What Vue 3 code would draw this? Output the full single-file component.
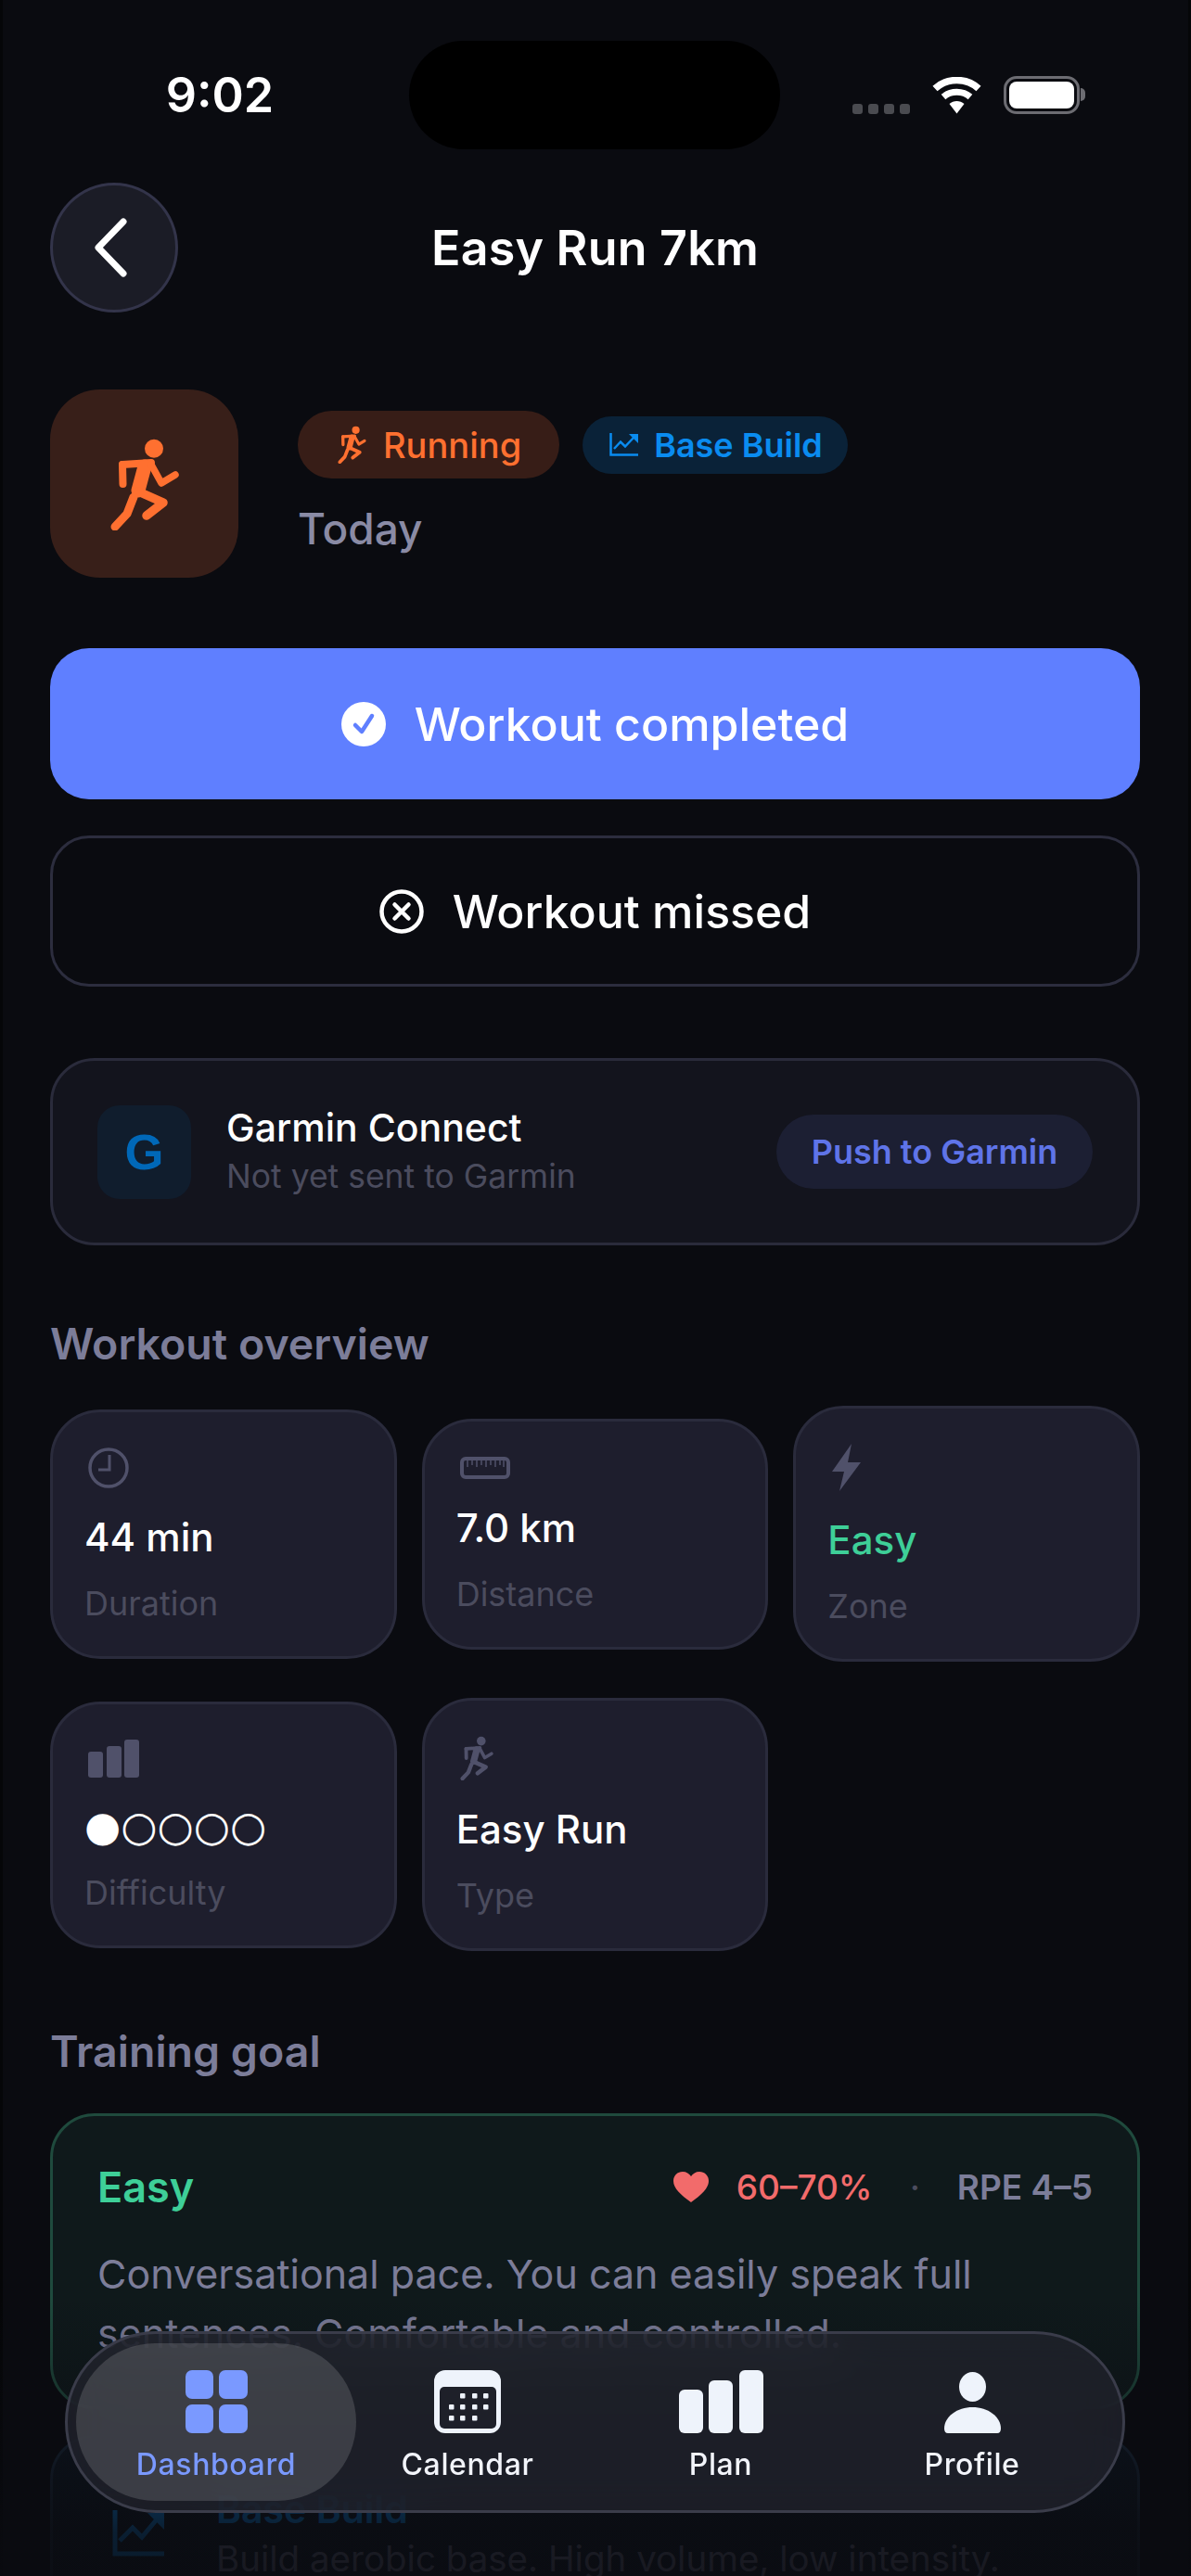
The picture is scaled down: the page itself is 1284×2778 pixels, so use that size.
<template>
  <div class="page">
    <svg class="defs" width="0" height="0">
      <symbol id="runner" viewBox="0 0 74 100">
        <circle cx="47" cy="11.700" r="10" fill="currentColor" stroke="none" />
        <g fill="none" stroke="currentColor" stroke-linecap="round" stroke-linejoin="round">
          <path d="M13 29 L13.500 50" stroke-width="8" />
          <path d="M13 29 L44 27" stroke-width="8" />
          <path d="M37 31 L30 57" stroke-width="15" />
          <path d="M44 29 L55 49 L70 40" stroke-width="7.500" />
          <path d="M30 58 L57 70 L39 84" stroke-width="9.500" />
          <path d="M25 64 L18 82 L5 96" stroke-width="9" />
        </g>
      </symbol>
    </svg>

    <!-- Status bar -->
    <div class="status-bar">
      <div class="time">9:02</div>
      <div class="island"></div>
      <div class="status-icons">
        <div class="signal"><i></i><i></i><i></i><i></i></div>
        <svg width="53" height="40" viewBox="0 0 53 40">
          <path d="M3 12.5 C16 0.5 37 0.5 50 12.5" fill="none" stroke="#fff" stroke-width="7.5" />
          <path d="M12 21.5 C20 14.5 33 14.5 41 21.5" fill="none" stroke="#fff" stroke-width="7" />
          <path d="M18.5 29 C23 25 30 25 34.5 29 L26.5 39.5 Z" fill="#fff" />
        </svg>
        <div class="battery"><span class="battery-fill"></span><span class="battery-nub"></span></div>
      </div>
    </div>

    <div class="content">
      <!-- Header -->
      <div class="header">
        <button class="back-btn">
          <svg width="36" height="64" viewBox="0 0 36 64">
            <path d="M32 4 L5 32 L32 60" fill="none" stroke="#fff" stroke-width="7" stroke-linecap="round" stroke-linejoin="round" />
          </svg>
        </button>
        <h1>Easy Run 7km</h1>
      </div>

      <!-- Workout summary -->
      <div class="hero">
        <div class="hero-icon">
          <svg width="74" height="100" class="orange"><use href="#runner" /></svg>
        </div>
        <div class="hero-info">
          <div class="pills">
            <span class="pill running">
              <svg width="33" height="41"><use href="#runner" /></svg>
              Running
            </span>
            <span class="pill base">
              <svg width="31" height="25" viewBox="0 0 31 25">
                <path d="M1.5 0 V23.5 H31" fill="none" stroke="currentColor" stroke-width="2.5" />
                <path d="M5 17 L12 9.5 L17 14.5 L26 5" fill="none" stroke="currentColor" stroke-width="2.5" />
                <path d="M21 1 H31 V11 Z" fill="currentColor" />
              </svg>
              Base Build
            </span>
          </div>
          <div class="when">Today</div>
        </div>
      </div>

      <!-- Actions -->
      <button class="action primary">
        <svg width="48" height="48" viewBox="0 0 48 48">
          <circle cx="24" cy="24" r="24" fill="#fff" />
          <path d="M15 25 L22 32 L33 15" fill="none" stroke="#5f7fff" stroke-width="4.5" stroke-linecap="round" stroke-linejoin="round" />
        </svg>
        Workout completed
      </button>
      <button class="action secondary">
        <svg width="48" height="48" viewBox="0 0 48 48">
          <circle cx="24" cy="24" r="21.5" fill="none" stroke="#fff" stroke-width="4.5" />
          <path d="M16.5 16.5 L31.5 31.5 M31.5 16.5 L16.5 31.5" fill="none" stroke="#fff" stroke-width="4.5" stroke-linecap="round" />
        </svg>
        Workout missed
      </button>

      <!-- Garmin -->
      <div class="garmin">
        <div class="garmin-logo">G</div>
        <div class="garmin-text">
          <div class="garmin-name">Garmin Connect</div>
          <div class="garmin-sub">Not yet sent to Garmin</div>
        </div>
        <button class="garmin-push">Push to Garmin</button>
      </div>

      <!-- Overview -->
      <h2 class="section-title first">Workout overview</h2>
      <div class="stats">
        <div class="stat">
          <svg class="stat-icon" width="44" height="44" viewBox="0 0 44 44">
            <circle cx="22" cy="22" r="20" fill="none" stroke="currentColor" stroke-width="3.5" />
            <path d="M23 8 V24 H11" fill="none" stroke="currentColor" stroke-width="3" />
          </svg>
          <div class="stat-value">44 min</div>
          <div class="stat-label">Duration</div>
        </div>
        <div class="stat">
          <svg class="stat-icon" width="54" height="24" viewBox="0 0 54 24">
            <rect x="2" y="2" width="50" height="20" rx="4" fill="none" stroke="currentColor" stroke-width="4" />
            <path d="M8 3 V11 M13 3 V9 M18 3 V11 M23 3 V9 M28 3 V11 M33 3 V9 M38 3 V11 M43 3 V9 M47 3 V11" stroke="currentColor" stroke-width="1.5" />
          </svg>
          <div class="stat-value">7.0 km</div>
          <div class="stat-label">Distance</div>
        </div>
        <div class="stat">
          <svg class="stat-icon" width="33" height="51" viewBox="0 0 33 51">
            <path d="M22 0 L1 30 H14 L9 51 L32 20 H18 Z" fill="currentColor" />
          </svg>
          <div class="stat-value green">Easy</div>
          <div class="stat-label">Zone</div>
        </div>
        <div class="stat">
          <svg class="stat-icon" width="56" height="41" viewBox="0 0 56 41">
            <rect x="0" y="13" width="16" height="28" rx="3" fill="currentColor" />
            <rect x="20" y="7" width="16" height="34" rx="3" fill="currentColor" />
            <rect x="39" y="0" width="16" height="41" rx="3" fill="currentColor" />
          </svg>
          <div class="stat-value dots">●○○○○</div>
          <div class="stat-label">Difficulty</div>
        </div>
        <div class="stat">
          <svg class="stat-icon" width="36" height="48"><use href="#runner" /></svg>
          <div class="stat-value">Easy Run</div>
          <div class="stat-label">Type</div>
        </div>
      </div>

      <!-- Goal -->
      <h2 class="section-title second">Training goal</h2>
      <div class="goal">
        <div class="goal-top">
          <span class="goal-name">Easy</span>
          <span class="goal-meta">
            <svg width="38" height="33" viewBox="0 0 38 33">
              <path d="M19 33 C8 25 0 18 0 10 C0 4 4.500 0 10 0 C14 0 17 2 19 5 C21 2 24 0 28 0 C33.500 0 38 4 38 10 C38 18 30 25 19 33 Z" fill="#f26b6b" />
            </svg>
            <span class="hr">60–70%</span>
            <span class="sep">·</span>
            <span class="rpe">RPE 4–5</span>
          </span>
        </div>
        <p class="goal-text">Conversational pace. You can easily speak full sentences. Comfortable and controlled.</p>
      </div>

      <div class="phase">
        <svg width="56" height="50" viewBox="0 0 56 50">
          <path d="M3 0 V47 H56" fill="none" stroke="currentColor" stroke-width="5" />
          <path d="M8 33 L22 19 L32 29 L48 10" fill="none" stroke="currentColor" stroke-width="5" />
          <path d="M38 3 H56 V21 Z" fill="currentColor" />
        </svg>
        <div>
          <div class="phase-name">Base Build</div>
          <div class="phase-text">Build aerobic base. High volume, low intensity.</div>
        </div>
      </div>
    </div>

    <div class="fade"></div>

    <!-- Tab bar -->
    <nav class="tabbar">
      <div class="tab active">
        <div class="tab-icon">
          <svg width="67" height="68" viewBox="0 0 67 68">
            <rect x="0" y="0" width="30" height="31" rx="7" fill="currentColor" />
            <rect x="36" y="0" width="31" height="31" rx="7" fill="currentColor" />
            <rect x="0" y="37" width="30" height="31" rx="7" fill="currentColor" />
            <rect x="36" y="37" width="31" height="31" rx="7" fill="currentColor" />
          </svg>
        </div>
        <span>Dashboard</span>
      </div>
      <div class="tab">
        <div class="tab-icon">
          <svg width="72" height="68" viewBox="0 0 72 68">
            <rect x="0" y="0" width="72" height="68" rx="12" fill="#eef3fb" />
            <rect x="6" y="18" width="61" height="45" rx="5" fill="#1e2029" />
            <g fill="#eef3fb">
              <rect v-for="d in calendarDots" :key="d[0] + '-' + d[1]" :x="d[0]" :y="d[1]" width="5.500" height="5.500" rx="1" />
            </g>
          </svg>
        </div>
        <span>Calendar</span>
      </div>
      <div class="tab">
        <div class="tab-icon">
          <svg width="91" height="68" viewBox="0 0 91 68">
            <rect x="0" y="21" width="26" height="47" rx="6" fill="#eef3fb" />
            <rect x="32" y="11" width="26" height="57" rx="6" fill="#eef3fb" />
            <rect x="65" y="0" width="26" height="68" rx="6" fill="#eef3fb" />
          </svg>
        </div>
        <span>Plan</span>
      </div>
      <div class="tab">
        <div class="tab-icon">
          <svg width="61" height="68" viewBox="0 0 61 68">
            <ellipse cx="30.500" cy="18" rx="14.500" ry="16" fill="#eef3fb" />
            <path d="M0 63 C0 50 14 40 30.500 40 C47 40 61 50 61 63 Q61 68 57 68 H4 Q0 68 0 63 Z" fill="#eef3fb" />
          </svg>
        </div>
        <span>Profile</span>
      </div>
    </nav>
  </div>
</template>

<script setup>
// x/y of the small day squares in the calendar tab icon
const calendarDots = [
  [28, 25], [41, 25], [53, 25],
  [16, 37], [28, 37], [41, 37], [53, 37],
  [16, 49], [28, 49], [41, 49]
]
</script>

<style>
html, body {
  margin: 0;
  background: #0a0b10;
}
</style>

<style scoped>
.page {
  position: relative;
  width: 1284px;
  height: 2778px;
  overflow: hidden;
  background: #0a0b10;
  box-shadow: inset 3px 0 0 #050608, inset -3px 0 0 #050608;
  color: #fff;
  font-family: Inter, "Noto Sans", sans-serif;
}

.defs {
  position: absolute;
}

/* Status bar */
.status-bar {
  display: grid;
  grid-template-columns: 441px 400px 1fr;
  align-items: center;
  padding: 44px 0 36px;
}

.time {
  padding-left: 33px;
  text-align: center;
  font-size: 52px;
  font-weight: 600;
}

.island {
  height: 117px;
  border-radius: 59px;
  background: #000;
}

.status-icons {
  display: flex;
  align-items: flex-end;
  gap: 24px;
  margin-left: 78px;
  height: 41px;
}

.signal {
  display: flex;
  gap: 6px;
}

.signal i {
  width: 11px;
  height: 11px;
  border-radius: 3px;
  background: #4a4b50;
}

.battery {
  position: relative;
  box-sizing: border-box;
  width: 82px;
  height: 41px;
  padding: 3px;
  border: 3px solid #6c6c72;
  border-radius: 14px;
}

.battery-fill {
  display: block;
  height: 100%;
  border-radius: 8px;
  background: #fff;
}

.battery-nub {
  position: absolute;
  top: 10px;
  right: -9px;
  width: 5px;
  height: 14px;
  border-radius: 0 5px 5px 0;
  background: #6c6c72;
}

.content {
  padding: 0 55px 0 54px;
}

/* Header */
.header {
  display: flex;
  align-items: center;
}

.back-btn {
  flex: none;
  display: flex;
  align-items: center;
  justify-content: center;
  box-sizing: border-box;
  width: 138px;
  height: 140px;
  padding: 0 8px 0 0;
  border: 3px solid #33344a;
  border-radius: 50%;
  background: #1b1c26;
}

.header h1 {
  flex: 1;
  margin: 0 138px 0 0;
  text-align: center;
  font-size: 52px;
  font-weight: 600;
  letter-spacing: 0.2px;
}

/* Hero */
.hero {
  display: flex;
  gap: 64px;
  margin-top: 83px;
}

.hero-icon {
  flex: none;
  display: flex;
  align-items: center;
  justify-content: center;
  width: 203px;
  height: 203px;
  border-radius: 54px;
  background: #381f19;
}

.orange {
  color: #ff7030;
}

.hero-info {
  padding-top: 23px;
}

.pills {
  display: flex;
  align-items: center;
  gap: 25px;
}

.pill {
  display: inline-flex;
  align-items: center;
  font-weight: 500;
  border-radius: 40px;
}

.pill.running {
  height: 73px;
  gap: 17px;
  padding: 0 41px 0 42px;
  background: #371d17;
  color: #ff7030;
  font-size: 38px;
}

.pill.base {
  height: 62px;
  gap: 17px;
  padding: 0 27px 0 29px;
  background: #0a2238;
  color: #0a8cf0;
  font-size: 36px;
  font-weight: 600;
}

.when {
  margin-top: 26px;
  font-size: 46px;
  font-weight: 500;
  color: #8a8ba5;
}

/* Action buttons */
.action {
  display: flex;
  align-items: center;
  justify-content: center;
  gap: 31px;
  box-sizing: border-box;
  width: 100%;
  height: 163px;
  border-radius: 42px;
  color: #fff;
  font-family: inherit;
  font-size: 50px;
  font-weight: 500;
}

.action.primary {
  margin-top: 76px;
  border: none;
  background: #5f7fff;
}

.action.secondary {
  margin-top: 39px;
  border: 3px solid #2c2d3e;
  background: transparent;
}

/* Garmin row */
.garmin {
  display: flex;
  align-items: center;
  box-sizing: border-box;
  height: 202px;
  margin-top: 77px;
  padding: 0 48px;
  border: 3px solid #2a2b3b;
  border-radius: 48px;
  background: #13141d;
}

.garmin-logo {
  flex: none;
  display: flex;
  align-items: center;
  justify-content: center;
  width: 101px;
  height: 101px;
  border-radius: 24px;
  background: #101d2d;
  color: #0068b8;
  font-family: "Liberation Sans", sans-serif;
  font-size: 54px;
  font-weight: 700;
}

.garmin-text {
  flex: 1;
  margin-left: 38px;
}

.garmin-name {
  font-size: 41px;
  font-weight: 500;
  line-height: 54px;
}

.garmin-sub {
  font-size: 35.500px;
  line-height: 52px;
  color: #4b4c5e;
}

.garmin-push {
  flex: none;
  width: 341px;
  height: 80px;
  padding: 0;
  border: none;
  border-radius: 40px;
  background: #1c1f33;
  color: #5f74e8;
  font-family: inherit;
  font-size: 36px;
  font-weight: 600;
}

/* Sections */
.section-title {
  margin: 0;
  font-size: 46.500px;
  line-height: 54px;
  font-weight: 600;
  color: #7c7d99;
}

.section-title.first {
  margin-top: 79px;
}

.section-title.second {
  margin-top: 81px;
}

.stats {
  display: grid;
  grid-template-columns: repeat(3, 1fr);
  align-items: center;
  gap: 39px 27px;
  margin-top: 40px;
}

.stat {
  padding: 38px 33px 35px 34px;
  border: 3px solid #2a2b3c;
  border-radius: 54px;
  background: #1e1e2d;
}

.stat-icon {
  display: block;
  margin-left: 4px;
  color: #50516a;
}

.stat-value {
  margin-top: 26px;
  font-size: 42px;
  line-height: 54px;
  font-weight: 500;
}

.stat-value.green {
  color: #3ecf98;
}

.stat-value.dots {
  font-family: "DejaVu Sans", sans-serif;
  font-size: 45px;
  font-weight: 400;
}

.stat-label {
  margin-top: 22px;
  font-size: 36px;
  line-height: 44px;
  color: #4b4c5e;
}

/* Training goal card */
.goal {
  margin-top: 40px;
  padding: 49px 48px 47px;
  border: 3px solid #1f4a3d;
  border-radius: 48px;
  background: #0f191b;
}

.goal-top {
  display: flex;
  align-items: center;
  justify-content: space-between;
  height: 54px;
}

.goal-name {
  font-size: 45px;
  font-weight: 600;
  color: #3ecf98;
}

.goal-meta {
  display: flex;
  align-items: center;
  font-size: 37px;
  font-weight: 500;
}

.hr {
  margin-left: 30px;
  color: #f26b6b;
}

.sep {
  margin: 0 40px;
  color: #4b4c5e;
}

.rpe {
  color: #7c7d99;
  font-weight: 600;
}

.goal-text {
  margin: 35px 0 0;
  font-size: 43px;
  line-height: 64px;
  color: #7c7d99;
}

/* Phase card, mostly faded out under the tab bar */
.phase {
  display: flex;
  gap: 56px;
  margin-top: 28px;
  padding: 49px 64px;
  border: 3px solid #1a2a3c;
  border-radius: 48px;
  background: #0d1722;
  color: #0a8cf0;
}

.phase svg {
  flex: none;
  margin-top: 29px;
}

.phase-name {
  font-size: 41px;
  font-weight: 600;
  line-height: 56px;
}

.phase-text {
  font-size: 38.500px;
  line-height: 50px;
  color: #7c7d99;
}

.fade {
  position: absolute;
  left: 0;
  right: 0;
  bottom: 0;
  height: 300px;
  background: linear-gradient(to bottom, rgba(10, 11, 16, 0) 0%, rgba(10, 11, 16, 0.85) 84%, rgba(10, 11, 16, 0.88) 100%);
  pointer-events: none;
}

/* Tab bar */
.tabbar {
  position: absolute;
  left: 70px;
  top: 2514px;
  display: grid;
  grid-template-columns: 302px 240px 306px 236px;
  box-sizing: border-box;
  width: 1143px;
  height: 196px;
  padding: 10px 9px;
  border: 3px solid #3a3c4a;
  border-radius: 98px;
  background: rgba(34, 36, 46, 0.72);
  backdrop-filter: blur(24px);
}

.tab {
  display: flex;
  flex-direction: column;
  align-items: center;
  padding-top: 29px;
  border-radius: 85px;
  font-size: 32px;
  font-weight: 500;
  letter-spacing: 0.6px;
  color: #f2f4fa;
}

.tab.active {
  background: rgba(255, 255, 255, 0.14);
  color: #7a99ff;
}

.tab-icon {
  height: 68px;
  margin-bottom: 14px;
}

.tab span {
  line-height: 40px;
}
</style>
